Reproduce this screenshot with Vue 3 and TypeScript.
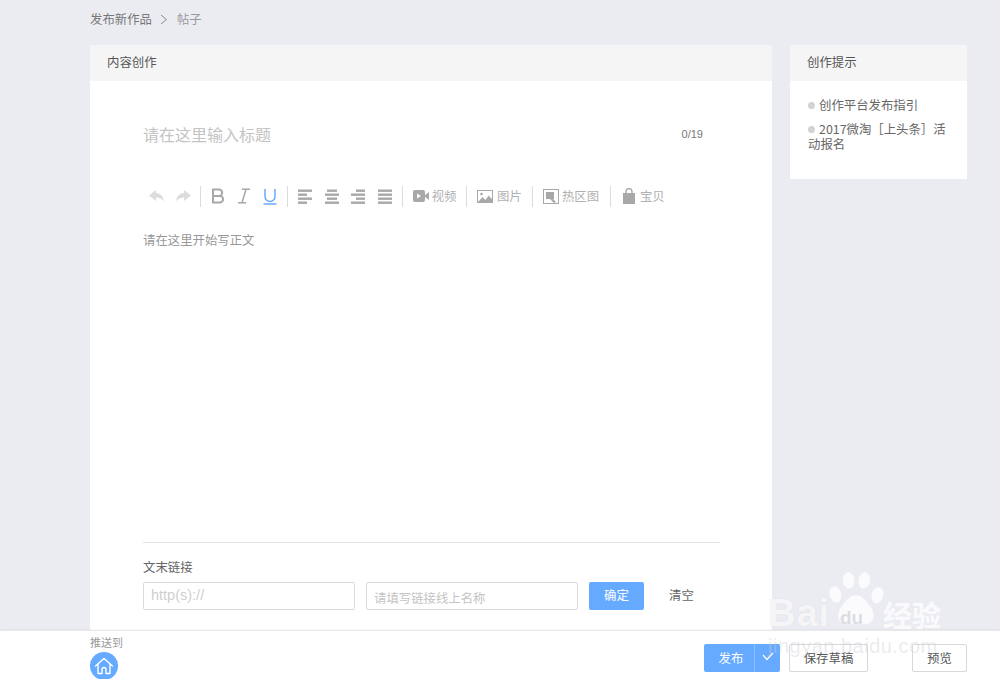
<script setup lang="ts">
const aligns: number[][] = [
  [14, 9, 14, 9],
  [10, 14, 10, 14],
  [9, 14, 9, 14],
  [14, 14, 14, 14],
]
function alignX(index: number, w: number): number {
  if (index === 0) return 1
  if (index === 1) return 8 - w / 2
  if (index === 2) return 15 - w
  return 1
}
</script>

<template>
  <div class="page">
    <div class="crumb">
      <span>发布新作品</span>
      <svg class="crumb-arrow" width="8" height="11" viewBox="0 0 8 11"><path d="M1 1l5.500 4.500L1 10" fill="none" stroke="#8a8a8a" stroke-width="1" /></svg>
      <span class="crumb-last">帖子</span>
    </div>

    <div class="columns">
      <section class="card main">
        <header class="card-head">内容创作</header>
        <div class="main-body">
          <div class="title-row">
            <span class="title-ph">请在这里输入标题</span>
            <span class="count">0/19</span>
          </div>

          <div class="toolbar">
            <span class="tool">
              <svg width="18" height="14" viewBox="0 0 18 14"><path d="M8 1L1 6.500 8 12V8.500c3.500 0 6 1 8 4-.5-5-3.500-8-8-8.500z" fill="#dcdcdc" /></svg>
            </span>
            <span class="tool">
              <svg width="18" height="14" viewBox="0 0 18 14"><path d="M10 1l7 5.500L10 12V8.500c-3.500 0-6 1-8 4 .5-5 3.500-8 8-8.500z" fill="#dcdcdc" /></svg>
            </span>
            <i class="sep"></i>
            <span class="tool">
              <svg width="14" height="16" viewBox="0 0 14 16"><path d="M2 1.500h6a3.200 3.200 0 0 1 0 6.400H2zM2 7.900h6.800a3.300 3.300 0 0 1 0 6.600H2z" fill="none" stroke="#a8a8a8" stroke-width="2" /></svg>
            </span>
            <span class="tool">
              <svg width="14" height="16" viewBox="0 0 14 16"><path d="M5 1.200h8M1 14.800h8M9 1.200L5 14.800" fill="none" stroke="#a8a8a8" stroke-width="1.500" /></svg>
            </span>
            <span class="tool">
              <svg width="14" height="17" viewBox="0 0 14 17"><path d="M2 1v7.500a5 5 0 0 0 10 0V1M0.500 16h13" fill="none" stroke="#66aaff" stroke-width="1.500" /></svg>
            </span>
            <i class="sep"></i>
            <span v-for="(rows, i) in aligns" :key="i" class="tool al">
              <svg width="16" height="15" viewBox="0 0 16 15">
                <rect v-for="(w, r) in rows" :key="r" :x="alignX(i, w)" :y="r * 4 + 0.500" :width="w" height="2.400" fill="#a8a8a8" />
              </svg>
            </span>
            <i class="sep"></i>
            <span class="tool-text video">
              <svg width="16" height="12" viewBox="0 0 16 12"><rect x="0" y="0" width="12" height="12" rx="2" fill="#a8a8a8" /><path d="M11 6l5-4v8z" fill="#a8a8a8" /><path d="M4 3.500l4 2.500-4 2.500z" fill="#fff" /></svg>
              视频
            </span>
            <i class="sep"></i>
            <span class="tool-text image">
              <svg width="16" height="13" viewBox="0 0 16 13"><rect x="0.500" y="0.500" width="15" height="12" fill="none" stroke="#a8a8a8" /><path d="M1 12l4.500-5 3 3 3-4.500L15 9v3.500H1z" fill="#a8a8a8" /><circle cx="4.500" cy="4" r="1.300" fill="#a8a8a8" /></svg>
              图片
            </span>
            <i class="sep"></i>
            <span class="tool-text hot">
              <svg width="16" height="15" viewBox="0 0 16 15"><rect x="0.500" y="0.500" width="15" height="14" fill="none" stroke="#a8a8a8" /><rect x="3" y="3" width="8" height="7" fill="#a8a8a8" /><path d="M8 8l5 5-2 1-4-4z" fill="#a8a8a8" /></svg>
              热区图
            </span>
            <i class="sep"></i>
            <span class="tool-text bag">
              <svg width="14" height="16" viewBox="0 0 14 16"><path d="M1 5h12v11H1z" fill="#a8a8a8" /><path d="M4 6.500V3.500a3 3 0 0 1 6 0v3" fill="none" stroke="#a8a8a8" stroke-width="1.400" /></svg>
              宝贝
            </span>
          </div>

          <div class="editor">请在这里开始写正文</div>

          <div class="link-area">
            <div class="link-label">文末链接</div>
            <div class="link-row">
              <div class="field">http(s)://</div>
              <div class="field second"><span>请填写链接线上名称</span></div>
              <button class="ok" type="button">确定</button>
              <span class="clear">清空</span>
            </div>
          </div>
        </div>
      </section>

      <aside class="card side">
        <header class="card-head">创作提示</header>
        <ul class="tips">
          <li>创作平台发布指引</li>
          <li>2017微淘［上头条］活动报名</li>
        </ul>
      </aside>
    </div>

    <footer class="bottom">
      <div class="push">
        <div class="push-label">推送到</div>
        <div class="push-icon">
          <svg width="20" height="20" viewBox="0 0 20 20"><path d="M1.500 10L10 2.500 18.500 10M4 8v9.500h4v-4a2 2 0 0 1 4 0v4h4V8" fill="none" stroke="#fff" stroke-width="1.400" stroke-linejoin="round" stroke-linecap="round" /></svg>
        </div>
      </div>
      <div class="actions">
        <div class="publish">
          <span class="publish-text">发布</span>
          <span class="publish-arrow">
            <svg width="12" height="9" viewBox="0 0 12 9"><path d="M1 3l4 4.500L11 1" fill="none" stroke="#fff" stroke-width="1.200" /></svg>
          </span>
        </div>
        <button class="ghost draft" type="button">保存草稿</button>
        <button class="ghost preview" type="button">预览</button>
      </div>
    </footer>

    <div class="watermark" aria-hidden="true">
      <svg class="paw" width="56" height="58" viewBox="0 0 68 70">
        <g fill="#fff" fill-opacity="0.8">
          <ellipse cx="9" cy="27" rx="7" ry="10" transform="rotate(-15 9 27)" />
          <ellipse cx="25" cy="10" rx="7" ry="10" transform="rotate(-5 25 10)" />
          <ellipse cx="44" cy="10" rx="7" ry="10" transform="rotate(8 44 10)" />
          <ellipse cx="60" cy="28" rx="7" ry="10" transform="rotate(15 60 28)" />
          <path d="M34 28c8 0 11 6 17 13 6 7 7 20-5 22-5 1-8-1-12-1s-8 2-13 1C10 61 11 48 17 41c6-7 9-13 17-13z" />
        </g>
      </svg>
      <span class="wm-b">Bai</span>
      <span class="wm-du">du</span>
      <span class="wm-cn">经验</span>
      <span class="wm-url">jingyan.baidu.com</span>
    </div>
  </div>
</template>

<style>
html,
body {
  margin: 0;
  background: #ebecf2;
}
</style>

<style scoped>
.page {
  position: relative;
  width: 1000px;
  height: 679px;
  overflow: hidden;
  background: #ebecf2;
  font-family: "Noto Sans CJK SC", "Liberation Sans", sans-serif;
  color: #666;
  font-size: 12.400px;
}
.crumb {
  display: flex;
  align-items: center;
  height: 45px;
  padding: 0 0 7px 90px;
  box-sizing: border-box;
  color: #777;
}
.crumb-arrow {
  margin: 0 9px 0 8px;
}
.crumb-last {
  color: #999;
}
.columns {
  display: flex;
  align-items: flex-start;
  gap: 18px;
  padding-left: 90px;
}
.card {
  background: #fff;
}
.card-head {
  height: 36px;
  line-height: 34px;
  padding-left: 17px;
  background: #f5f5f5;
  color: #555;
}
.main {
  width: 682px;
  height: 600px;
}
.main-body {
  padding: 0 52px 0 53px;
  display: flex;
  flex-direction: column;
}
.title-row {
  display: flex;
  justify-content: space-between;
  align-items: center;
  height: 28px;
  margin-top: 39px;
  padding-right: 17px;
}
.title-ph {
  font-size: 16px;
  color: #c4c4c4;
}
.count {
  font-size: 11px;
  color: #777;
  font-family: "Liberation Sans", sans-serif;
  padding-bottom: 1px;
}
.toolbar {
  display: flex;
  align-items: center;
  height: 22px;
  margin-top: 37px;
  color: #b0b0b0;
}
.tool {
  width: 26.300px;
  height: 22px;
  display: flex;
  align-items: center;
  justify-content: center;
  flex: none;
}
.tool:first-child {
  margin-left: 1px;
}
.tool.al {
  width: 26.700px;
}
.sep {
  flex: none;
  width: 1px;
  height: 21px;
  background: #dcdcdc;
  margin: 0 3.500px;
}
.tool-text {
  display: flex;
  align-items: center;
  gap: 3px;
  padding: 0 7px 0 6.500px;
  flex: none;
}
.video {
  padding-right: 6px;
}
.image {
  gap: 4px;
  padding-right: 6.700px;
}
.hot {
  padding-right: 7.300px;
}
.bag {
  padding-left: 7.500px;
  gap: 4px;
}
.editor {
  height: 311px;
  margin-top: 24px;
  line-height: 18px;
  color: #999;
}
.link-area {
  border-top: 1px solid #e2e2e2;
}
.link-label {
  margin-top: 15px;
  line-height: 18px;
  color: #666;
}
.link-row {
  display: flex;
  align-items: center;
  margin-top: 6px;
}
.field {
  width: 212px;
  height: 28px;
  box-sizing: border-box;
  border: 1px solid #dcdcdc;
  border-radius: 2px;
  padding-left: 7px;
  line-height: 24px;
  color: #cfcfcf;
  font-size: 14.500px;
  font-family: "Liberation Sans", sans-serif;
}
.second {
  margin-left: 11px;
  font-family: "Noto Sans CJK SC", sans-serif;
  font-size: 12.400px;
  line-height: 30px;
  color: #c4c4c4;
}
.ok {
  width: 55px;
  height: 28px;
  margin-left: 11px;
  border: 0;
  border-radius: 2px;
  background: #66aaff;
  color: #fff;
  font: inherit;
  padding: 0 0 2px;
}
.clear {
  margin-left: 25px;
  padding-bottom: 3px;
  color: #666;
}
.side {
  width: 177px;
  height: 134px;
}
.tips {
  list-style: none;
  margin: 0;
  padding: 17px 16px 0 18px;
  color: #666;
}
.tips li {
  line-height: 15px;
  margin-bottom: 9px;
}
.tips li::before {
  content: "";
  display: inline-block;
  width: 7px;
  height: 7px;
  border-radius: 50%;
  background: #d3d3d3;
  margin-right: 4px;
  vertical-align: 1px;
}
.bottom {
  position: absolute;
  left: 0;
  right: 0;
  top: 630px;
  height: 49px;
  background: #fff;
  border-top: 1px solid #e8e8e8;
  box-shadow: 0 -1px 2px rgba(0, 0, 0, 0.03);
  box-sizing: border-box;
  display: flex;
  justify-content: space-between;
  padding: 0 33px 0 90px;
}
.push-label {
  font-size: 11px;
  line-height: 14px;
  margin-top: 4px;
  color: #999;
}
.push-icon {
  width: 28px;
  height: 28px;
  margin-top: 3px;
  border-radius: 50%;
  background: #66aaff;
  display: flex;
  align-items: center;
  justify-content: center;
}
.actions {
  display: flex;
  align-items: flex-start;
  padding-top: 13px;
}
.publish {
  display: flex;
  width: 76px;
  height: 28px;
  border-radius: 2px;
  background: #66aaff;
  color: #fff;
  line-height: 28px;
}
.publish-text {
  width: 51px;
  box-sizing: border-box;
  text-align: center;
  padding-left: 4px;
  border-right: 1px solid #8fc0ff;
}
.publish-arrow {
  flex: 1;
  display: flex;
  align-items: center;
  justify-content: center;
  padding-bottom: 4px;
}
.ghost {
  height: 28px;
  box-sizing: border-box;
  border: 1px solid #d8d8d8;
  border-radius: 2px;
  background: #fff;
  color: #555;
  font: inherit;
  padding: 0;
}
.draft {
  width: 79px;
  margin-left: 9px;
}
.preview {
  width: 55px;
  margin-left: 44px;
}
.watermark {
  position: absolute;
  left: 768px;
  top: 570px;
  width: 190px;
  height: 90px;
  pointer-events: none;
}
.paw {
  position: absolute;
  left: 60px;
  top: 2px;
}
.wm-b {
  position: absolute;
  left: 0;
  top: 18px;
  font: bold 38px/50px "Liberation Sans", sans-serif;
  letter-spacing: 1px;
  color: rgba(255, 255, 255, 0.8);
  text-shadow: 0 0 1px rgba(190, 190, 200, 0.5);
}
.wm-du {
  position: absolute;
  left: 72px;
  top: 36px;
  font: bold 19px/24px "Liberation Sans", sans-serif;
  color: #dcdde3;
}
.wm-cn {
  position: absolute;
  left: 115px;
  top: 26px;
  font: bold 29px/36px "Noto Sans CJK SC", sans-serif;
  color: rgba(255, 255, 255, 0.8);
}
.wm-url {
  position: absolute;
  left: 0;
  top: 64px;
  font: 20px/24px "Liberation Sans", sans-serif;
  letter-spacing: 0.500px;
  color: rgba(205, 205, 215, 0.4);
}
</style>
